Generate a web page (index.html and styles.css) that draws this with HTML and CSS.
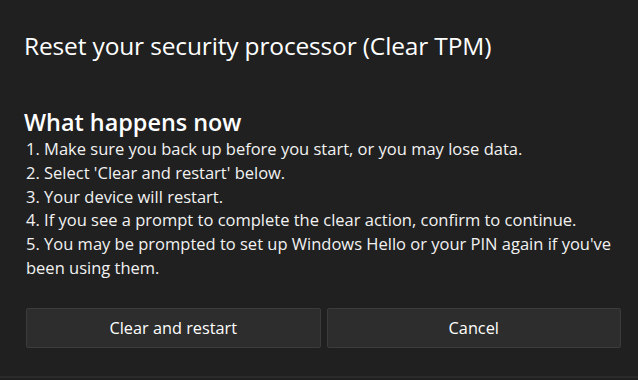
FILE: index.html
```html
<!DOCTYPE html>
<html>
<head>
<meta charset="utf-8">
<link rel="stylesheet" href="styles.css">
</head>
<body>
<div class="dialog">
  <h1 class="title">Reset your security processor (Clear TPM)</h1>
  <h2 class="heading">What happens now</h2>
  <ol class="steps">
    <li>1. Make sure you back up before you start, or you may lose data.</li>
    <li>2. Select 'Clear and restart' below.</li>
    <li>3. Your device will restart.</li>
    <li>4. If you see a prompt to complete the clear action, confirm to continue.</li>
    <li>5. You may be prompted to set up Windows Hello or your PIN again if you've been using them.</li>
  </ol>
  <div class="actions">
    <button class="btn">Clear and restart</button>
    <button class="btn">Cancel</button>
  </div>
</div>
</body>
</html>
```
FILE: styles.css
```css
html, body {
  margin: 0;
  padding: 0;
  background: #202020;
}
body {
  width: 638px;
  height: 380px;
  overflow: hidden;
  font-family: "Open Sans", "Noto Sans", sans-serif;
  color: #ffffff;
}
.dialog {
  height: 378px;
  box-sizing: border-box;
  padding: 30px 17px 0 24px;
  display: flex;
  flex-direction: column;
  border-bottom: 2px solid #2a2a2a;
}
.title {
  margin: 0;
  font-size: 24.5px;
  font-weight: 500;
  line-height: 32px;
  letter-spacing: -0.15px;
}
.heading {
  margin: 45px 0 0 0;
  font-size: 23.4px;
  font-weight: 600;
  line-height: 30px;
}
.steps {
  list-style: none;
  margin: 0;
  padding: 0 0 0 2px;
  font-size: 16.5px;
  line-height: 23.8px;
  color: #f2f2f2;
}
.actions {
  margin-top: 28px;
  display: flex;
  gap: 6px;
  padding-left: 2px;
}
.btn {
  flex: 1;
  height: 40px;
  background: #2d2d2d;
  border: 1px solid #3b3b3b;
  border-radius: 2px;
  color: #ffffff;
  font-family: inherit;
  font-size: 16.3px;
}
```
